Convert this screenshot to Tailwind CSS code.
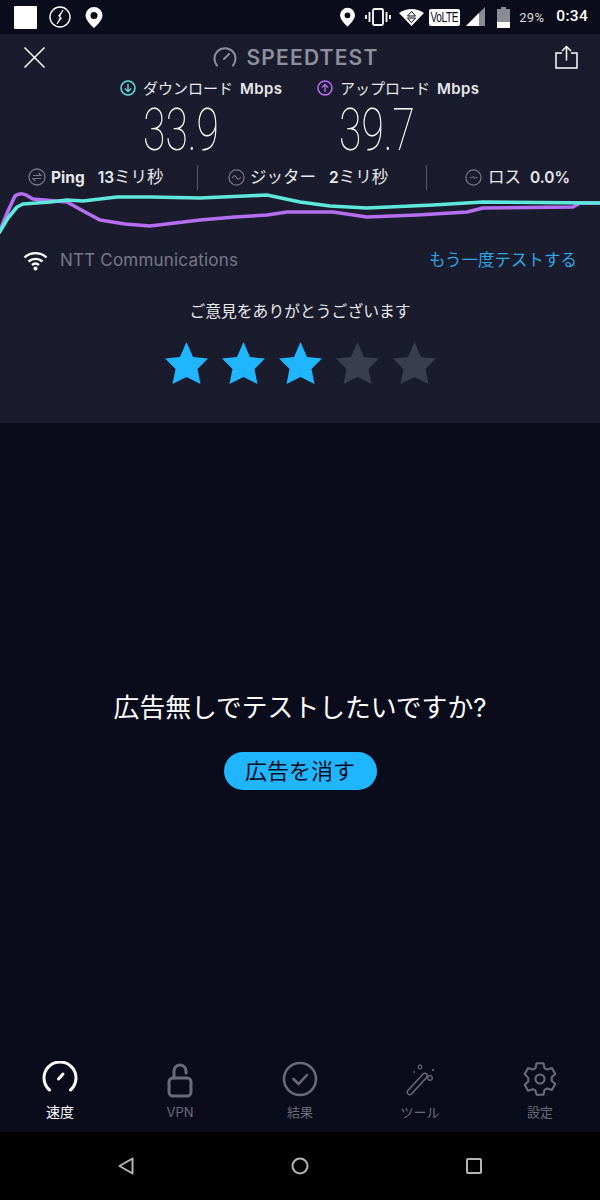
<!DOCTYPE html>
<html lang="ja"><head><meta charset="utf-8">
<script src="https://cdn.jsdelivr.net/npm/@tailwindcss/browser@4"></script>
</head>
<body class="m-0 bg-[#0a0c1c]">
<div class="w-[600px] h-[1200px] flex flex-col overflow-hidden bg-[#0a0c1c] text-white font-['Inter','Noto_Sans_CJK_JP',sans-serif]">
  <!-- status bar -->
  <div class="h-[34px] shrink-0 flex items-center pl-[14px] pr-[12px] bg-[#0a0c1c]">
    <div class="w-[23px] h-[23px] bg-white rounded-[1px]"></div>
    <svg class="ml-[11px]" width="24" height="24" viewBox="0 0 24 24"><circle cx="12" cy="12" r="10" fill="none" stroke="#fff" stroke-width="1.400"/><path d="M15 5 L10.500 11 L12.500 12 L9 19 L13.500 13 L11.500 12 Z" fill="#fff" stroke="#fff" stroke-width="0.800"/></svg>
    <svg class="ml-[12px]" width="20" height="24" viewBox="0 0 20 24"><path fill-rule="evenodd" d="M10 2a8.500 8.500 0 0 0-8.500 8.500C1.500 16 10 23 10 23s8.500-7 8.500-12.500A8.500 8.500 0 0 0 10 2Zm0 5a3.500 3.500 0 1 1 0 7 3.500 3.500 0 0 1 0-7Z" fill="#fff"/></svg>
    <div class="flex-1"></div>
    <svg width="17" height="20" viewBox="0 0 20 24"><path fill-rule="evenodd" d="M10 1a9 9 0 0 0-9 9C1 16 10 23.500 10 23.500S19 16 19 10a9 9 0 0 0-9-9Zm0 5.500a3.500 3.500 0 1 1 0 7 3.500 3.500 0 0 1 0-7Z" fill="#fff"/></svg>
    <svg class="ml-[9px]" width="26" height="18" viewBox="0 0 26 18"><rect x="8" y="1" width="10" height="16" rx="1.500" fill="none" stroke="#fff" stroke-width="1.800"/><path d="M4.500 4v10M21.500 4v10" stroke="#fff" stroke-width="1.800"/><path d="M1 7v4M25 7v4" stroke="#fff" stroke-width="1.800"/></svg>
    <svg class="ml-[8px]" width="25" height="18" viewBox="0 0 25 18"><path d="M0 5 Q12.500 -3 25 5 L12.500 18 Z" fill="#fff"/><path d="M12.500 3.500 L8.500 8 H16.500 Z M12.500 14.500 L8.500 10 H16.500 Z" fill="none" stroke="#0a0c1c" stroke-width="1"/></svg>
    <div class="ml-[5px] w-[31px] h-[17px] bg-white rounded-[2px] flex items-center justify-center text-[#0a0c1c] text-[14px] leading-[17px] font-['Liberation_Sans',sans-serif] tracking-[-0.5px]"><span class="inline-block scale-x-[0.72]">VoLTE</span></div>
    <svg class="ml-[6px]" width="19" height="20" viewBox="0 0 19 20"><path d="M0 19 L19 0 V19 Z" fill="#8b8c93"/><path d="M0 19 L13 6 V19 Z" fill="#fff"/></svg>
    <svg class="ml-[12px]" width="13" height="21" viewBox="0 0 13 21"><rect x="4" y="0" width="5" height="2" fill="#8b8c93"/><rect x="0" y="2" width="13" height="13" fill="#8b8c93"/><rect x="0" y="15" width="13" height="6" fill="#fff"/></svg>
    <span class="ml-[9px] text-[13px] leading-none text-[#d9dadd] tracking-[0.3px] font-['Roboto',sans-serif]">29%</span>
    <span class="ml-[12px] text-[15.500px] leading-none font-medium font-['Roboto',sans-serif] tracking-[0.3px]">0:34</span>
  </div>

  <!-- result panel -->
  <div class="h-[389px] shrink-0 bg-[#1a1c2e] flex flex-col">
    <div class="h-[46px] shrink-0 flex items-center pl-[23px] pr-[22px]">
      <svg width="23" height="23" viewBox="0 0 23 23"><path d="M1.500 1.500 L21.500 21.500 M21.500 1.500 L1.500 21.500" stroke="#fff" stroke-width="1.500"/></svg>
      <div class="flex-1 flex items-center justify-center gap-[9px] pr-[9px] text-[#8e8f9c]">
        <svg width="24" height="22" viewBox="0 0 24 22"><path d="M4 19.500 A10.500 10.500 0 1 1 20 19.500" fill="none" stroke="#8e8f9c" stroke-width="2" stroke-linecap="round"/><path d="M11 13 L16 8" stroke="#8e8f9c" stroke-width="2" stroke-linecap="round"/></svg>
        <span class="text-[21px] leading-none font-semibold tracking-[1.200px]">SPEEDTEST</span>
      </div>
      <svg width="23" height="24" viewBox="0 0 23 24"><path d="M7 8 H1 V23 H22 V8 H16" fill="none" stroke="#fff" stroke-width="1.500"/><path d="M11.500 15.500 V1.500 M7 6 L11.500 1.500 L16 6" fill="none" stroke="#fff" stroke-width="1.500"/></svg>
    </div>

    <div class="h-[20px] flex items-center text-[15px] leading-none text-[#e8e9ec] mt-[-2px]">
      <div class="flex items-center ml-[120px] w-[197px]">
        <svg width="16" height="16" viewBox="0 0 16 16"><circle cx="8" cy="8" r="7" fill="none" stroke="#5fe3d9" stroke-width="1.500"/><path d="M8 4 V11.500 M5 8.500 L8 11.500 L11 8.500" fill="none" stroke="#5fe3d9" stroke-width="1.300"/></svg>
        <span class="ml-[7px] whitespace-nowrap">ダウンロード</span><span class="ml-[7px] font-semibold tracking-[0.4px]">Mbps</span>
      </div>
      <div class="flex items-center">
        <svg width="16" height="16" viewBox="0 0 16 16"><circle cx="8" cy="8" r="7" fill="none" stroke="#bb6ef2" stroke-width="1.500"/><path d="M8 12 V4.500 M5 7.500 L8 4.500 L11 7.500" fill="none" stroke="#bb6ef2" stroke-width="1.300"/></svg>
        <span class="ml-[7px] whitespace-nowrap">アップロード</span><span class="ml-[7px] font-semibold tracking-[0.4px]">Mbps</span>
      </div>
    </div>

    <div class="h-[48px] mt-[8px] flex items-center font-['Roboto',sans-serif] font-thin text-[60px] leading-[48px]">
      <div class="ml-[121px] w-[120px] text-center scale-x-[0.68]">33.9</div>
      <div class="ml-[76px] w-[120px] text-center scale-x-[0.68]">39.7</div>
    </div>

    <div class="h-[26px] mt-[10px] flex items-center text-[16.500px] leading-none text-[#e8e9ec]">
      <svg class="ml-[28px]" width="18" height="18" viewBox="0 0 18 18"><circle cx="9" cy="9" r="8" fill="none" stroke="#777887" stroke-width="1.300"/><path d="M5 7.500 H13 L10.500 5 M13 10.500 H5 L7.500 13" fill="none" stroke="#777887" stroke-width="1.100"/></svg>
      <span class="ml-[5px] whitespace-nowrap w-[146px]"><span class="font-bold text-[15.500px]">Ping</span><span class="ml-[13px] font-semibold text-[15.500px]">13</span>ミリ秒</span>
      <div class="w-[1px] h-[25px] bg-[#55566a]"></div>
      <svg class="ml-[30px]" width="17" height="17" viewBox="0 0 18 18"><circle cx="9" cy="9" r="8" fill="none" stroke="#777887" stroke-width="1.300"/><path d="M4.500 9.500 C6.500 6 8 7 9 9 C10 11 11.500 12 13.500 8.500" fill="none" stroke="#777887" stroke-width="1.100"/></svg>
      <span class="ml-[5px] whitespace-nowrap w-[176px]">ジッター<span class="ml-[13px] font-semibold text-[15.500px]">2</span>ミリ秒</span>
      <div class="w-[1px] h-[25px] bg-[#55566a]"></div>
      <svg class="ml-[38px]" width="17" height="17" viewBox="0 0 18 18"><circle cx="9" cy="9" r="8" fill="none" stroke="#777887" stroke-width="1.300"/><path d="M5 9 H8 L9 7.500 L10 10.500 L11 9 H13" fill="none" stroke="#777887" stroke-width="1"/></svg>
      <span class="ml-[6px] whitespace-nowrap">ロス<span class="ml-[9px] font-semibold text-[15.500px]">0.0%</span></span>
    </div>

    <svg class="block mt-[-2px]" width="600" height="50" viewBox="0 188 600 50">
      <path d="M-1 233 L8 211 L15 196 Q20 192 26 195 L33 199 L67 202 L85 212 L100 220 L125 224 L150 226 L200 220 L235 217 L267 215 L287 212 L333 212 L367 217 L417 215 L467 212 L483 208 L573 207 L580 203 L600 203" fill="none" stroke="#b56ff0" stroke-width="3.600" stroke-linejoin="round"/>
      <path d="M-1 233 L8 218 L17 207 L23 204 L50 202 L67 200 L83 201 L117 197 L150 197 L200 198 L267 195 L300 202 L330 206 L367 208 L433 205 L483 202 L597 203 L600 203" fill="none" stroke="#5fe8dc" stroke-width="3.600" stroke-linejoin="round"/>
    </svg>

    <div class="h-[24px] mt-[10px] flex items-center pl-[23px] pr-[23px]">
      <svg width="25" height="21" viewBox="0 0 25 21"><path d="M1.500 7.500 A16 16 0 0 1 23.500 7.500 M5.500 11.500 A10.500 10.500 0 0 1 19.500 11.500 M9 15 A5.500 5.500 0 0 1 16 15" fill="none" stroke="#fff" stroke-width="2.400"/><circle cx="12.500" cy="18.500" r="2" fill="#fff"/></svg>
      <span class="ml-[12px] text-[17px] leading-none text-[#777887] tracking-[0.2px]">NTT Communications</span>
      <span class="ml-auto text-[16.500px] leading-none text-[#2fa6e4]">もう一度テストする</span>
    </div>

    <div class="mt-[29px] text-center text-[15.800px] leading-[22px] text-[#e8e9ec]">ご意見をありがとうございます</div>

    <div class="mt-[19px] flex justify-center gap-[14px]">
      <svg width="43" height="42" viewBox="0 0 43 42"><path d="M21.500 0 L28 15 L43 16.500 L32.500 27 L35.500 42 L21.500 35 L7.500 42 L10.500 27 L0 16.500 L15 15 Z" fill="#1fb6ff"/></svg>
      <svg width="43" height="42" viewBox="0 0 43 42"><path d="M21.500 0 L28 15 L43 16.500 L32.500 27 L35.500 42 L21.500 35 L7.500 42 L10.500 27 L0 16.500 L15 15 Z" fill="#1fb6ff"/></svg>
      <svg width="43" height="42" viewBox="0 0 43 42"><path d="M21.500 0 L28 15 L43 16.500 L32.500 27 L35.500 42 L21.500 35 L7.500 42 L10.500 27 L0 16.500 L15 15 Z" fill="#1fb6ff"/></svg>
      <svg width="43" height="42" viewBox="0 0 43 42"><path d="M21.500 0 L28 15 L43 16.500 L32.500 27 L35.500 42 L21.500 35 L7.500 42 L10.500 27 L0 16.500 L15 15 Z" fill="#3a3c4f"/></svg>
      <svg width="43" height="42" viewBox="0 0 43 42"><path d="M21.500 0 L28 15 L43 16.500 L32.500 27 L35.500 42 L21.500 35 L7.500 42 L10.500 27 L0 16.500 L15 15 Z" fill="#3a3c4f"/></svg>
    </div>
  </div>

  <!-- ad area -->
  <div class="flex-1 flex flex-col items-center pt-[267px]">
    <div class="text-[25.800px] leading-[36px] text-white">広告無しでテストしたいですか?</div>
    <div class="mt-[26px] w-[153px] h-[38px] rounded-full bg-[#1fb6ff] flex items-center justify-center text-[22px] leading-none text-[#0a0c1c]">広告を消す</div>
  </div>

  <!-- tab bar -->
  <div class="h-[92px] shrink-0 grid grid-cols-5 text-[13px] leading-none text-[#6a6b7a]">
    <div class="flex flex-col items-center pt-[21px] text-white">
      <svg width="36" height="32" viewBox="0 0 36 32"><path d="M7.500 29 A16 16 0 1 1 28.500 29" fill="none" stroke="#fff" stroke-width="3" stroke-linecap="round"/><path d="M16.500 18 L21 13" stroke="#fff" stroke-width="3" stroke-linecap="round"/></svg>
      <span class="mt-[10px] h-[18px] flex items-center text-[14px]">速度</span>
    </div>
    <div class="flex flex-col items-center pt-[21px]">
      <svg width="26" height="36" viewBox="0 0 26 36" class="mt-[2px] mb-[-6px]"><rect x="2" y="15" width="22" height="18" rx="4" fill="none" stroke="#6a6b7a" stroke-width="3"/><path d="M7 15 V8 A6 6 0 0 1 19 8 V10" fill="none" stroke="#6a6b7a" stroke-width="3" stroke-linecap="round"/></svg>
      <span class="mt-[10px] h-[18px] flex items-center">VPN</span>
    </div>
    <div class="flex flex-col items-center pt-[21px]">
      <svg width="36" height="36" viewBox="0 0 36 36" class="mb-[-4px]"><circle cx="18" cy="18" r="16" fill="none" stroke="#6a6b7a" stroke-width="2.500"/><path d="M11.500 18 L16.500 23 L25 14" fill="none" stroke="#6a6b7a" stroke-width="2.500" stroke-linecap="round"/></svg>
      <span class="mt-[10px] h-[18px] flex items-center">結果</span>
    </div>
    <div class="flex flex-col items-center pt-[21px]">
      <svg width="32" height="36" viewBox="0 0 32 36" class="mb-[-4px]"><path d="M3.500 30 L19 13 Q21 11.500 22.500 13 Q24 14.500 22.500 16.500 L7.500 33 Q5.500 34.500 4 33 Q2.500 31.500 3.500 30 Z" fill="none" stroke="#6a6b7a" stroke-width="1.500"/><circle cx="16" cy="6" r="1.800" fill="none" stroke="#6a6b7a" stroke-width="1.200"/><circle cx="26" cy="17" r="2.300" fill="none" stroke="#6a6b7a" stroke-width="1.200"/><circle cx="29" cy="9" r="1.100" fill="#6a6b7a"/><circle cx="10" cy="11" r="0.900" fill="#6a6b7a"/></svg>
      <span class="mt-[10px] h-[18px] flex items-center">ツール</span>
    </div>
    <div class="flex flex-col items-center pt-[21px]">
      <svg width="36" height="36" viewBox="0 0 24 24" class="mb-[-4px]"><path d="M9.700 1.500h4.600l.7 3.200 1.800 1 3.100-1 2.300 4-2.400 2.200v2.200l2.400 2.200-2.300 4-3.100-1-1.800 1-.7 3.200H9.700L9 19.800l-1.800-1-3.100 1-2.300-4 2.400-2.200v-2.200L1.800 8.700l2.300-4 3.100 1 1.800-1z" fill="none" stroke="#6a6b7a" stroke-width="1.400" stroke-linejoin="round"/><circle cx="12" cy="12" r="3" fill="none" stroke="#6a6b7a" stroke-width="1.400"/></svg>
      <span class="mt-[10px] h-[18px] flex items-center text-[13px]">設定</span>
    </div>
  </div>

  <!-- nav bar -->
  <div class="h-[68px] shrink-0 bg-black flex items-center justify-center gap-[157px]">
    <svg width="16" height="18" viewBox="0 0 16 18"><path d="M14.500 1.500 V16.500 L1.500 9 Z" fill="none" stroke="#b5b5b5" stroke-width="2" stroke-linejoin="round"/></svg>
    <svg width="18" height="18" viewBox="0 0 18 18"><circle cx="9" cy="9" r="7.500" fill="none" stroke="#b5b5b5" stroke-width="2"/></svg>
    <svg width="16" height="16" viewBox="0 0 16 16"><rect x="1" y="1" width="14" height="14" rx="1" fill="none" stroke="#b5b5b5" stroke-width="2"/></svg>
  </div>
</div>
</body></html>
